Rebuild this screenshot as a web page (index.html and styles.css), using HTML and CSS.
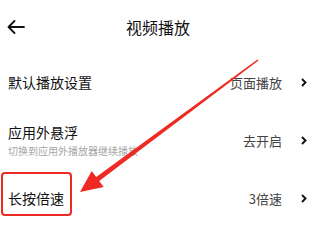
FILE: index.html
```html
<!DOCTYPE html>
<html lang="zh-CN">
<head>
    <meta charset="UTF-8">
    <meta name="viewport" content="width=device-width, initial-scale=1.0">
    <title>视频播放</title>
    <link rel="stylesheet" href="styles.css">
</head>
<body>
    <div class="page">
        <div class="header">
            <svg class="back" width="18" height="14" viewBox="0 0 18 14">
                <path d="M17 7H1.5M7.5 1L1.5 7l6 6" fill="none" stroke="#111" stroke-width="1.8" stroke-linecap="round" stroke-linejoin="round"/>
            </svg>
            <div class="title">视频播放</div>
            <div></div>
        </div>

        <div class="row">
            <div class="label">默认播放设置</div>
            <div class="value">页面播放</div>
            <svg class="chev" width="6" height="9" viewBox="0 0 6 9"><path d="M1 1l3.5 3.5L1 8" fill="none" stroke="#111" stroke-width="1.9"/></svg>
        </div>

        <div class="row">
            <div class="label">
                应用外悬浮
                <div class="sub">切换到应用外播放器继续播放</div>
            </div>
            <div class="value">去开启</div>
            <svg class="chev" width="6" height="9" viewBox="0 0 6 9"><path d="M1 1l3.5 3.5L1 8" fill="none" stroke="#111" stroke-width="1.9"/></svg>
        </div>

        <div class="row">
            <div class="label">长按倍速</div>
            <div class="value">3倍速</div>
            <svg class="chev" width="6" height="9" viewBox="0 0 6 9"><path d="M1 1l3.5 3.5L1 8" fill="none" stroke="#111" stroke-width="1.9"/></svg>
            <div class="mark-box"></div>
        </div>

        <!-- 标注箭头 -->
        <svg class="mark-arrow" width="324" height="237" viewBox="0 0 324 237">
            <polygon points="257.5,59.4 258.5,60.6 99.2,180.9 103.7,186.9 80,192 91.7,170.9 96.2,176.9" fill="#ee2a22"/>
        </svg>
    </div>
</body>
</html>
```

FILE: styles.css
```css
body {
    margin: 0;
    background: #fff;
    font-family: "Noto Sans CJK SC", "Noto Sans", sans-serif;
    color: #111;
}
.page {
    position: relative;
    width: 324px;
    height: 237px;
    overflow: hidden;
}
.header {
    display: grid;
    grid-template-columns: 32px 1fr 40px;
    align-items: center;
    height: 53px;
}
.back {
    margin-left: 7px;
}
.title {
    text-align: center;
    font-size: 16px;
}
.row {
    position: relative;
    display: flex;
    align-items: center;
    height: 58px;
    padding: 0 17px 0 8px;
}
.label {
    flex: 1;
    font-size: 14px;
    line-height: 18px;
}
.sub {
    font-size: 10px;
    line-height: 14px;
    color: #a6a6a6;
    margin-top: 3px;
}
.value {
    font-size: 13px;
    color: #444;
    margin-right: 19px;
}
.chev {
    display: block;
}
.mark-box {
    position: absolute;
    left: 1px;
    top: 3px;
    width: 67px;
    height: 40px;
    border: 2.5px solid #ee2a22;
    border-radius: 4px;
}
.mark-arrow {
    position: absolute;
    left: 0;
    top: 0;
}
```
